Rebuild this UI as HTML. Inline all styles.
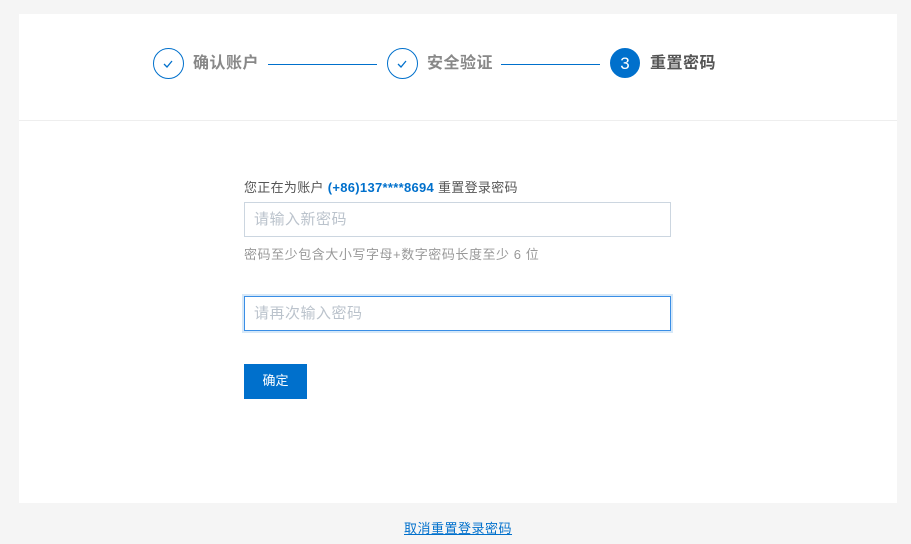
<!DOCTYPE html>
<html><head><meta charset="utf-8"><style>
body{margin:0;width:911px;height:544px;background:#f5f5f5;font-family:"Liberation Sans","Noto Sans CJK SC",sans-serif;position:relative;overflow:hidden}
.card{position:absolute;left:19px;top:14px;width:878px;height:489px;background:#fff}
.hd{position:absolute;left:0;top:0;width:878px;height:106px;border-bottom:1px solid #eee}
.ab{position:absolute}
.c{position:absolute;width:31px;height:31px;border:1px solid #0070cc;border-radius:50%;box-sizing:border-box;top:34px}
.t{position:absolute;font-size:16px;font-weight:bold;color:#888;line-height:22px;top:39px;letter-spacing:0.5px}
.ln{position:absolute;top:50px;height:1px;background:#0070cc}
.inp{position:absolute;left:225px;width:427px;height:35px;box-sizing:border-box;border:1px solid #ccd6e0;font-size:15px;color:#bbc3cc;padding:0 9px;line-height:33px;letter-spacing:0.5px}
</style></head><body>
<div class="card">
<div class="hd">
<div class="c" style="left:134px"><svg width="29" height="29" style="position:absolute;left:0;top:0"><path d="M10 15l3 3 5-6" fill="none" stroke="#0070cc" stroke-width="1.3"/></svg></div>
<div class="t" style="left:174px">确认账户</div>
<div class="ln" style="left:249px;width:109px"></div>
<div class="c" style="left:368px"><svg width="29" height="29" style="position:absolute;left:0;top:0"><path d="M10 15l3 3 5-6" fill="none" stroke="#0070cc" stroke-width="1.3"/></svg></div>
<div class="t" style="left:408px">安全验证</div>
<div class="ln" style="left:482px;width:99px"></div>
<div class="c" style="left:591px;width:30px;height:30px;background:#0070cc;color:#fff;font-size:17px;text-align:center;line-height:29px;top:34px">3</div>
<div class="t" style="left:631px;color:#555">重置密码</div>
</div>
<div class="ab" style="left:225px;top:165px;font-size:13px;color:#555;line-height:18px;letter-spacing:0.3px">您正在为账户 <b style="color:#0070cc">(+86)137****8694</b> 重置登录密码</div>
<div class="inp" style="top:188px">请输入新密码</div>
<div class="ab" style="left:225px;top:232px;font-size:13px;color:#999;line-height:18px;letter-spacing:0.55px">密码至少包含大小写字母+数字密码长度至少 6 位</div>
<div class="inp" style="top:282px;border-color:#3a8ee6;box-shadow:0 0 0 2px #d6e8f8">请再次输入密码</div>
<div class="ab" style="left:225px;top:350px;width:63px;height:35px;background:#0070cc;color:#fff;font-size:13px;text-align:center;line-height:34px">确定</div>
</div>
<div class="ab" style="left:404px;top:520px;font-size:13px;color:#0070cc;text-decoration:underline;line-height:18px;letter-spacing:0.5px">取消重置登录密码</div>
</body></html>
